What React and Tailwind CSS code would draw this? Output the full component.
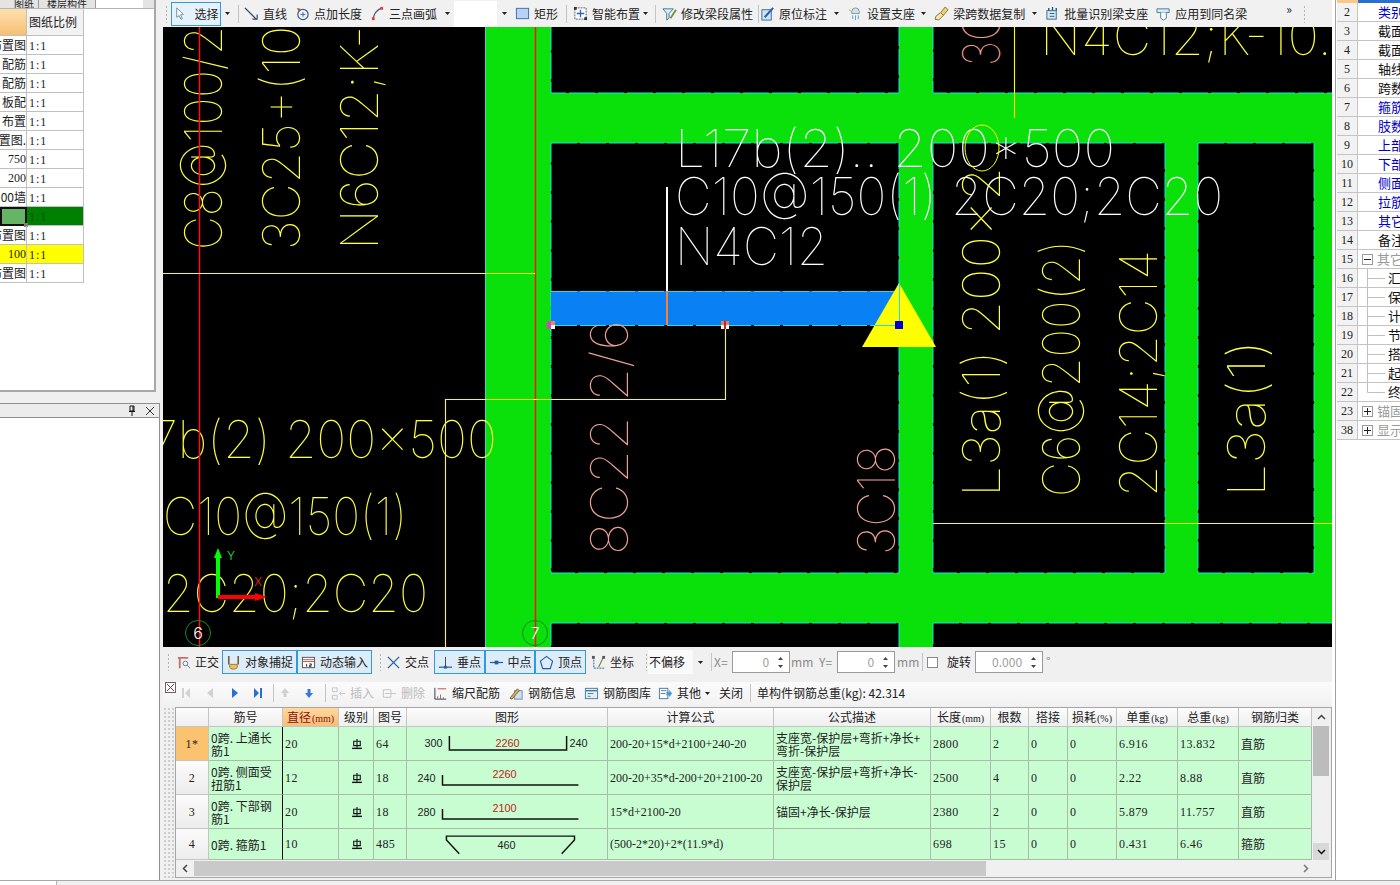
import React from 'react'

const CJK = "[font-family:'Noto_Sans_CJK_SC','Liberation_Sans',sans-serif]"
const NUM = "[font-family:'Liberation_Serif','Noto_Sans_CJK_SC',serif]"

// toolbar icons, all on a 16 grid
const Ic = ({ children, className = 'w-[15px] h-[15px]' }) => (
  <svg viewBox="0 0 16 16" className={`${className} flex-none`} fill="none">{children}</svg>
)
const icons = {
  cursor: <><path d="M4 2l7 7-3 .5 2 4-1.5.7-2-4L4 12z" fill="#fff" stroke="#6a8aa8" /></>,
  line: <><path d="M1 2l12 12" stroke="#35485c" strokeWidth="1.5" /><path d="M14 9v5H9" stroke="#35485c" strokeWidth="1.2" /></>,
  addLen: <><circle cx="8.5" cy="9" r="5.5" stroke="#345f9a" strokeWidth="1.3" /><path d="M8.5 6.5v5M6 9h5" stroke="#345f9a" /><path d="M2 2l4 1-2 3z" fill="#c05030" /></>,
  arc: <><path d="M3 15C4 8 7 4 13 2" stroke="#506070" strokeWidth="1.4" /><rect x="2" y="12" width="3" height="3" fill="#e04040" /><rect x="11" y="1" width="3" height="3" fill="#e04040" /></>,
  rect: <><rect x="1.5" y="2.5" width="13" height="11" fill="#b8d4f4" stroke="#3b6fb0" /></>,
  smart: <><rect x="2" y="2" width="12" height="12" fill="#fff" stroke="#555" strokeDasharray="2 1" /><path d="M8 4v8M4 8h8" stroke="#2a6ab0" strokeWidth="1.4" /><rect x="1" y="1" width="3" height="3" fill="#333" /><rect x="12" y="12" width="3" height="3" fill="#333" /></>,
  edit: <><path d="M1 3h11l-4.500 5v5L5 15V8z" fill="#d7ecf5" stroke="#42789a" /><path d="M9 13l6-9" stroke="#7a8f3a" strokeWidth="2" /></>,
  mark: <><rect x="2" y="4" width="10" height="11" fill="#cfe4f4" stroke="#3a6a9a" /><path d="M5 12l9-10" stroke="#2a5fa8" strokeWidth="2.2" /></>,
  support: <><path d="M8 2a4 4 0 014 4v2H4V6a4 4 0 014-4z" fill="#cfe0ea" stroke="#7a9aaa" /><path d="M5 10v4M8 10v5M11 10v4" stroke="#5aa0d0" /><path d="M1 4l3 2" stroke="#c8a040" /></>,
  copy: <><path d="M12 1l3 3-5 6-3-3z" fill="#e8d080" stroke="#8a7030" /><path d="M7 7l3 3-5 5-4-1 1-3z" fill="#f0e4b0" stroke="#8a7030" /></>,
  batch: <><rect x="2" y="5" width="10" height="9" fill="#d8e8f0" stroke="#3a6a8a" /><path d="M4 2v3M8 1v4M12 2v3" stroke="#1a5f8a" strokeWidth="1.5" /><path d="M5 8h5M5 11h5" stroke="#1a5f8a" /></>,
  apply: <><path d="M1 3h13v4H1z" fill="#d8e8f4" stroke="#4a7a9a" /><path d="M5 7v6l3 2 3-2V7" fill="#fff" stroke="#4a7a9a" /></>,
  ortho: <><path d="M2 3h11M4 3v11" stroke="#c87070" strokeWidth="2" /><circle cx="10" cy="9" r="2.5" stroke="#5a7a9a" /><path d="M12 11l3 3" stroke="#5a7a9a" /></>,
  snap: <><path d="M3 1v9M13 1v9" stroke="#6a4a2a" strokeWidth="1.5" /><path d="M4 10h8v3a3 3 0 01-3 2H7a3 3 0 01-3-2z" fill="#e8c060" stroke="#a07a20" /></>,
  dyn: <><rect x="1.5" y="2.5" width="13" height="11" fill="#fff" stroke="#555" /><path d="M2 5h12M2 7h12" stroke="#c05050" /><path d="M6 9.5v3M9 9.5h2v1.5H9v1.5h2" stroke="#222" /></>,
  cross: <><path d="M2 2l12 12M14 2L2 14" stroke="#1f5fa8" strokeWidth="1.4" /></>,
  perp: <><path d="M1 13h14" stroke="#1f5fa8" strokeWidth="1.3" /><path d="M8 2v11" stroke="#444" /><rect x="6.5" y="11.5" width="3" height="3" fill="#1f5fa8" /></>,
  mid: <><path d="M1 8h14" stroke="#1f5fa8" strokeWidth="1.3" /><rect x="6" y="6" width="4" height="4" fill="#1f5fa8" /></>,
  vertex: <><path d="M8 1.5l6.5 5-2.500 8H4l-2.500-8z" stroke="#1f5fa8" strokeWidth="1.2" /></>,
  coord: <><path d="M3 2v12h11" stroke="#1f5fa8" strokeDasharray="2 1" /><path d="M8 13L13 3" stroke="#6a8a30" strokeWidth="1.2" /><rect x="1" y="1" width="3" height="3" fill="#555" /><rect x="12" y="1" width="3" height="3" fill="#555" /></>,
  ins: <><path d="M1.5 2h5v4h-5zM1.5 10h5v4h-5z" stroke="#c4c4c4" /><path d="M9 8h6M9 8l2-2M9 8l2 2" stroke="#c4c4c4" /></>,
  del: <><path d="M1.5 4h8v8h-8z" stroke="#c4c4c4" /><path d="M3 8h12" stroke="#c4c4c4" /></>,
  scale: <><path d="M2 2v12M2 14h12" stroke="#333" /><path d="M5 11v3M8 9v5M11 12v2" stroke="#777" /><path d="M5 3h9" stroke="#c04040" /></>,
  info: <><rect x="6" y="5" width="8" height="9" fill="#cfe0f0" stroke="#6a8aaa" /><path d="M1 13l8-10 2 2-8 9z" fill="#d8b070" stroke="#806030" /></>,
  lib: <><rect x="1.5" y="2.5" width="13" height="11" fill="#e4f0f8" stroke="#4a7aa0" /><path d="M2 5h12" stroke="#4a7aa0" strokeWidth="1.5" /><path d="M4 8h6M4 11h3" stroke="#4a7aa0" /></>,
  other: <><rect x="1.5" y="2.5" width="9" height="11" fill="#fff" stroke="#4a7aa0" /><path d="M3 5h6M3 8h5" stroke="#4a7aa0" /><path d="M9 6h3V4l3 4-3 4v-2H9z" fill="#4a9ad8" /></>,
}

const Grip = ({ className = '' }) => (
  <span className={`w-[3px] h-[18px] flex-none bg-[radial-gradient(#b4b4b4_1px,transparent_1px)] bg-[length:3px_4px] ${className}`} />
)
const Sep = ({ className = '' }) => <span className={`w-px h-[18px] flex-none bg-[#c4c4c4] ${className}`} />
const Caret = ({ className = '' }) => (
  <svg viewBox="0 0 5 3" className={`w-[5px] h-[3px] flex-none ${className}`}><path d="M0 0h5L2.500 3z" fill="#222" /></svg>
)
const Tool = ({ icon, label, className = '', dim = false }) => (
  <span className={`flex items-center gap-[4px] flex-none whitespace-nowrap ${dim ? 'text-[#bcbcbc]' : ''} ${className}`}>
    <Ic>{icons[icon]}</Ic>
    {label}
  </span>
)
const Toggle = ({ icon, label, w }) => (
  <span className={`flex items-center justify-center gap-[4px] h-[24px] flex-none whitespace-nowrap border border-[#3399dd] bg-[#dcecf8] ${w}`}>
    <Ic>{icons[icon]}</Ic>
    {label}
  </span>
)
const Spin = ({ value, w, className = '' }) => (
  <span className={`flex items-center justify-end h-[22px] flex-none bg-white border border-[#9a9a9a] text-[#a0a0a0] ${w} ${className}`}>
    {value}
    <span className="flex flex-col items-center justify-center gap-[5px] w-[17px] ml-[3px]">
      <svg viewBox="0 0 5 3" className="w-[5px] h-[3px]"><path d="M0 3h5L2.500 0z" fill="#444" /></svg>
      <svg viewBox="0 0 5 3" className="w-[5px] h-[3px]"><path d="M0 0h5L2.500 3z" fill="#444" /></svg>
    </span>
  </span>
)

function TopToolbar() {
  return (
    <div className="h-[27px] flex items-center bg-[#f1f1f1] text-[12px] text-[#222]">
      <Grip className="ml-[2px]" />
      <span className="ml-[3px] w-[50px] h-[24px] flex items-center justify-center gap-[6px] border border-[#3399dd] bg-[#e6f2fb] flex-none">
        <Ic>{icons.cursor}</Ic>选择
      </span>
      <Caret className="ml-[4px]" />
      <Sep className="ml-[8px]" />
      <Tool icon="line" label="直线" className="ml-[5px]" />
      <Tool icon="addLen" label="点加长度" className="ml-[8px]" />
      <Tool icon="arc" label="三点画弧" className="ml-[8px]" />
      <Caret className="ml-[8px]" />
      <span className="ml-[4px] w-[43px] h-[26px] bg-white flex-none" />
      <Caret className="ml-[5px]" />
      <Tool icon="rect" label="矩形" className="ml-[8px]" />
      <Sep className="ml-[8px]" />
      <Tool icon="smart" label="智能布置" className="ml-[6px]" />
      <Caret className="ml-[3px]" />
      <Sep className="ml-[7px]" />
      <Tool icon="edit" label="修改梁段属性" className="ml-[6px]" />
      <Sep className="ml-[5px]" />
      <Tool icon="mark" label="原位标注" className="ml-px" />
      <Caret className="ml-[7px]" />
      <Tool icon="support" label="设置支座" className="ml-[9px]" />
      <Caret className="ml-[6px]" />
      <Tool icon="copy" label="梁跨数据复制" className="ml-[8px]" />
      <Caret className="ml-[7px]" />
      <Tool icon="batch" label="批量识别梁支座" className="ml-[8px]" />
      <Tool icon="apply" label="应用到同名梁" className="ml-[8px]" />
      <span className="ml-[39px] w-[10px] text-[12px] leading-none -mt-[10px] flex-none">»</span>
      <Grip className="ml-[7px]" />
    </div>
  )
}

function SnapToolbar() {
  return (
    <div className="h-[30px] flex items-center bg-[#f0f0f0] text-[12px] text-[#222]">
      <Grip className="ml-[4px]" />
      <Tool icon="ortho" label="正交" className="ml-[6px]" />
      <span className="ml-[3px] flex flex-none">
        <Toggle icon="snap" label="对象捕捉" w="w-[75px]" />
        <Toggle icon="dyn" label="动态输入" w="w-[75px]" />
      </span>
      <Grip className="ml-[7px]" />
      <Tool icon="cross" label="交点" className="ml-[4px]" />
      <span className="ml-[5px] flex flex-none">
        <Toggle icon="perp" label="垂点" w="w-[51px]" />
        <Toggle icon="mid" label="中点" w="w-[50px]" />
        <Toggle icon="vertex" label="顶点" w="w-[51px]" />
      </span>
      <Tool icon="coord" label="坐标" className="ml-[5px]" />
      <Grip className="ml-[11px]" />
      <span className="w-[45px] h-[24px] flex items-center bg-[#fafafa] flex-none pl-px">不偏移</span>
      <Caret className="ml-[5px]" />
      <Sep className="ml-[8px]" />
      <span className="ml-[2px] w-[17px] flex-none text-[#8a8a8a]">X=</span>
      <Spin value="0" w="w-[58px]" className="ml-px" />
      <span className="ml-px w-[22px] flex-none text-[#8a8a8a]">mm</span>
      <span className="ml-[6px] w-[17px] flex-none text-[#8a8a8a]">Y=</span>
      <Spin value="0" w="w-[58px]" className="ml-px" />
      <span className="ml-[2px] w-[22px] flex-none text-[#8a8a8a]">mm</span>
      <Sep className="ml-[3px]" />
      <span className="ml-[4px] w-[11px] h-[11px] flex-none bg-white border border-[#8a8a8a]" />
      <span className="ml-[9px] w-[24px] flex-none">旋转</span>
      <Spin value="0.000" w="w-[68px]" className="ml-[4px]" />
      <span className="ml-[3px] text-[#8a8a8a] -mt-[3px]">°</span>
    </div>
  )
}

const Nav = ({ d, color, className = '' }) => (
  <svg viewBox="0 0 14 14" className={`w-[14px] h-[14px] flex-none ${className}`}><path d={d} fill={color} /></svg>
)

function BarToolbar() {
  return (
    <div className="h-[23px] flex items-center bg-gradient-to-b from-[#fbfbfb] to-[#f2f2f2] text-[12px] text-[#222] pb-[1px]">
      <svg viewBox="0 0 11 11" className="ml-[2px] w-[11px] h-[11px] -mt-[12px] flex-none"><rect x=".5" y=".5" width="10" height="10" fill="#fff" stroke="#666" /><path d="M2 2l7 7M9 2L2 9" stroke="#a03030" /></svg>
      <Nav className="ml-[3px]" d="M3 2h2v10H3zM11 2v10L6 7z" color="#d2d2d2" />
      <Nav className="ml-[10px]" d="M10 2v10L4 7z" color="#d2d2d2" />
      <Nav className="ml-[11px]" d="M4 2v10l6-5z" color="#2a70d0" />
      <Nav className="ml-[9px]" d="M9 2h2v10H9zM3 2v10l5-5z" color="#2a70d0" />
      <Sep className="ml-[8px]" />
      <Nav className="ml-[4px]" d="M7 2l4 5H8.500v4h-3V7H3z" color="#d0d0d0" />
      <Nav className="ml-[10px]" d="M7 12L3 7h2.500V3h3v4H11z" color="#3a78d8" />
      <Sep className="ml-[9px]" />
      <Tool icon="ins" label="插入" dim className="ml-[5px]" />
      <Tool icon="del" label="删除" dim className="ml-[8px]" />
      <Tool icon="scale" label="缩尺配筋" className="ml-[8px]" />
      <Tool icon="info" label="钢筋信息" className="ml-[9px]" />
      <Tool icon="lib" label="钢筋图库" className="ml-[8px]" />
      <Tool icon="other" label="其他" className="ml-[7px]" />
      <Caret className="ml-[4px]" />
      <span className="ml-[9px] w-[24px] flex-none">关闭</span>
      <Sep className="ml-[7px]" />
      <span className="ml-[6px] whitespace-nowrap">单构件钢筋总重(kg): 42.314</span>
    </div>
  )
}

const CadText = ({ x, y, len, rot, color = '#ffff40', children }) => (
  <text
    x={x}
    y={y}
    textLength={len}
    lengthAdjust="spacingAndGlyphs"
    fontSize="52"
    fontWeight="100"
    fontFamily="Inter, 'DejaVu Sans', sans-serif"
    fill={color}
    transform={rot ? `rotate(-90 ${x} ${y})` : undefined}
  >
    {children}
  </text>
)

const GREEN = '#0ae00a'
const CELLS = [
  [551, 143, 348, 430],
  [933, 143, 232, 430],
  [1198, 143, 116, 430],
  [551, 20, 348, 73],
  [933, 20, 420, 73],
  [551, 623, 348, 40],
  [933, 623, 420, 40],
]

function Canvas() {
  return (
    <svg viewBox="163 27 1169 620" className="block w-[1169px] h-[620px] flex-none">
      <rect x="163" y="27" width="1169" height="620" fill="#000" />
      <rect x="485" y="27" width="847" height="620" fill={GREEN} />
      {CELLS.map(([x, y, w, h]) => (
        <rect key={`${x}-${y}`} x={x} y={y} width={w} height={h} fill="#000" stroke="#20e0e0" strokeDasharray="26 3" />
      ))}
      <path d="M485.500 27v620" stroke="#20e0e0" />
      <rect x="551" y="291" width="348" height="34" fill="#0a80f5" />
      <path d="M551 291.500h348M551 325.500h348" stroke="#20e0e0" strokeDasharray="26 3" />

      <CadText x={222} y={250} len={224} rot>C8@100/2</CadText>
      <CadText x={300} y={250} len={224} rot>3C25+(10</CadText>
      <CadText x={378} y={250} len={224} rot>N6C12;K-</CadText>
      <CadText x={1000} y={66} len={56} rot color="#f0a090">3C</CadText>
      <CadText x={1000} y={497} len={330} rot>L3a(1) 200×2</CadText>
      <CadText x={1080} y={497} len={257} rot>C6@200(2)</CadText>
      <CadText x={1157} y={497} len={247} rot>2C14;2C14</CadText>
      <CadText x={1265} y={497} len={157} rot>L3a(1)</CadText>
      <CadText x={628} y={555} len={235} rot color="#f0a090">8C22 2/6</CadText>
      <CadText x={895} y={555} len={110} rot color="#f0a090">3C18</CadText>
      <CadText x={150} y={458} len={347}>7b(2) 200×500</CadText>
      <CadText x={163} y={535} len={244}>C10@150(1)</CadText>
      <CadText x={163} y={612} len={265}>2C20;2C20</CadText>
      <CadText x={1040} y={55} len={292}>N4C12;K-10.</CadText>
      <CadText x={675} y={167} len={440} color="#fff">L17b(2).. 200*500</CadText>
      <CadText x={675} y={215} len={548} color="#fff">C10@150(1) 2C20;2C20</CadText>
      <CadText x={675} y={265} len={153} color="#fff">N4C12</CadText>

      <path d="M199.500 27v620M535.500 27v620" stroke="#ff1010" strokeWidth="1.500" />
      <path d="M163 273.500h372M1014.500 27v91M933 523.500h399M725.500 325v74.500H445.500V647" stroke="#ffff00" strokeWidth="1.100" fill="none" />
      <ellipse cx="982" cy="148" rx="17" ry="23" fill="none" stroke="#ffff00" />
      <path d="M667 187v104" stroke="#fff" strokeWidth="2" />
      <path d="M667 291v34" stroke="#ff8030" strokeWidth="2" />

      <path d="M899 283l37 64h-74z" fill="#ffff00" />
      <path d="M899.500 283v42M875 325.500h24" stroke="#20e0e0" />
      <rect x="895" y="321" width="8" height="8" fill="#0000c8" />

      <rect x="547" y="321" width="4" height="8" fill="#e040c0" />
      <rect x="551" y="321" width="4" height="4" fill="#e09050" />
      <rect x="551" y="325" width="4" height="4" fill="#fff" />
      <rect x="721" y="321" width="8" height="4" fill="#e88050" />
      <rect x="721" y="325" width="8" height="4" fill="#fff" />
      <rect x="724" y="321" width="2" height="8" fill="#d02020" />

      <path d="M218 598v-44" stroke="#00ff00" strokeWidth="4" />
      <path d="M218 548l-4 10h8z" fill="#00ff00" />
      <path d="M218 597h40" stroke="#ff0000" strokeWidth="4" />
      <path d="M267 597l-12-4v8z" fill="#ff0000" />
      <text x="227" y="560" fontSize="12" fill="#20c040" fontFamily="Liberation Sans">Y</text>
      <text x="254" y="586" fontSize="12" fill="#d02020" fontFamily="Liberation Sans">X</text>

      <circle cx="198" cy="633" r="12.500" fill="none" stroke="#1a8a2a" />
      <text x="198" y="639" fontSize="16" fill="#fff" textAnchor="middle" fontWeight="300" fontFamily="Inter">6</text>
      <circle cx="535" cy="633" r="12.500" fill="none" stroke="#108a20" />
      <text x="535" y="639" fontSize="16" fill="#fff" textAnchor="middle" fontWeight="300" fontFamily="Inter">7</text>
    </svg>
  )
}

const Grade = () => (
  <svg viewBox="0 0 11 11" className="w-[12px] h-[12px]" fill="none" stroke="#111">
    <path d="M2.500 3h6v4h-6zM5.500 1v8" />
    <path d="M1 9.500h9" strokeWidth="1.300" />
  </svg>
)

const RED = '#c02020'
const Bent = ({ left, mid, right, x0, x1, y, tick, midX, midY, rightTick }) => (
  <svg viewBox="0 0 201 34" className="w-[201px] h-[34px]">
    <text x={x0 - 7} y={y - 3} textAnchor="end" fontSize="11" fontFamily="Liberation Sans" fill="#222">{left}</text>
    <path d={`M${x0} ${y - tick}V${y}H${x1}${rightTick ? `V${y - rightTick}` : ''}`} fill="none" stroke="#111" strokeWidth="1.500" />
    <text x={midX} y={midY} textAnchor="middle" fontSize="11" fontFamily="Liberation Sans" fill={RED}>{mid}</text>
    {right && <text x={x1 + 3} y={y - 3} fontSize="11" fontFamily="Liberation Sans" fill="#222">{right}</text>}
  </svg>
)
const Stirrup = () => (
  <svg viewBox="0 0 201 30" className="w-[201px] h-[30px]">
    <path d="M51 25L38 11V7h130v4l-13 14" fill="none" stroke="#111" strokeWidth="1.500" />
    <text x="99" y="20" textAnchor="middle" fontSize="11" fontFamily="Liberation Sans" fill="#222">460</text>
  </svg>
)

const HEAD = [['', ''], ['筋号', ''], ['直径', '(mm)'], ['级别', ''], ['图号', ''], ['图形', ''], ['计算公式', ''], ['公式描述', ''], ['长度', '(mm)'], ['根数', ''], ['搭接', ''], ['损耗', '(%)'], ['单重', '(kg)'], ['总重', '(kg)'], ['钢筋归类', '']]
const ROWS = [
  { n: '1*', name: '0跨. 上通长\n筋1', d: '20', fig: '64', shape: <Bent left="300" mid="2260" right="240" x0={41} x1={160} y={23} tick={14} rightTick={14} midX={100} midY={20} />, f: '200-20+15*d+2100+240-20', desc: '支座宽-保护层+弯折+净长+\n弯折-保护层', len: '2800', c: '2', w: '6.916', t: '13.832', k: '直筋' },
  { n: '2', name: '0跨. 侧面受\n扭筋1', d: '12', fig: '18', shape: <Bent left="240" mid="2260" x0={34} x1={172} y={24} tick={10} midX={97} midY={17} />, f: '200-20+35*d-200+20+2100-20', desc: '支座宽-保护层+弯折+净长-\n保护层', len: '2500', c: '4', w: '2.22', t: '8.88', k: '直筋' },
  { n: '3', name: '0跨. 下部钢\n筋1', d: '20', fig: '18', shape: <Bent left="280" mid="2100" x0={34} x1={172} y={24} tick={10} midX={97} midY={17} />, f: '15*d+2100-20', desc: '锚固+净长-保护层', len: '2380', c: '2', w: '5.879', t: '11.757', k: '直筋' },
  { n: '4', name: '0跨. 箍筋1', d: '10', fig: '485', shape: <Stirrup />, f: '(500-2*20)+2*(11.9*d)', desc: '', len: '698', c: '15', w: '0.431', t: '6.46', k: '箍筋' },
]
const cell = 'border-r border-b border-[#a8bca8] flex items-center pl-[2px] overflow-hidden bg-[#c8fdd2]'
const num = `${NUM} text-[12px] tracking-[0.4px] text-[#222]`

function RebarGrid() {
  return (
    <div className={`grid grid-cols-[33px_74px_56px_35px_33px_201px_166px_157px_60px_38px_39px_49px_61px_61px_73px] grid-rows-[19px_34px_34px_34px_31px] w-[1136px] flex-none overflow-hidden text-[12px] text-[#222] ${CJK}`}>
      {HEAD.map(([h, unit], i) => (
        <div
          key={h + i}
          className={`flex items-center justify-center whitespace-nowrap border-r border-b border-[#c4c4c4] bg-gradient-to-b ${i === 2 ? 'from-[#ffd89c] to-[#f6bf74] text-[#8a1020]' : 'from-[#fcfcfc] to-[#efefef]'}`}
        >
          <span>
            {h}
            {unit && <span className={`${NUM} text-[10px] ml-px`}>{unit}</span>}
          </span>
        </div>
      ))}
      {ROWS.map((r, ri) => (
        <React.Fragment key={r.n}>
          <div className={`flex items-center justify-center border-r border-b border-[#c4c4c4] ${num} ${ri === 0 ? 'bg-[#fbc270] text-[#8a3010]' : 'bg-gradient-to-b from-[#fbfbfb] to-[#ececec]'}`}>{r.n}</div>
          <div className={`${cell} leading-[13px] whitespace-pre-line border-r-[#111]`}><span className="w-full">{r.name}</span></div>
          <div className={`${cell} ${num} ${ri === 0 ? 'bg-[#aee8d8]' : ''}`}>{r.d}</div>
          <div className={`${cell} justify-center`}><Grade /></div>
          <div className={`${cell} ${num}`}>{r.fig}</div>
          <div className={`${cell} pl-0`}>{r.shape}</div>
          <div className={`${cell} ${NUM} text-[12px] text-[#222] whitespace-nowrap`}>{r.f}</div>
          <div className={`${cell} leading-[13px] whitespace-pre-line`}><span className="w-full">{r.desc}</span></div>
          <div className={`${cell} ${num}`}>{r.len}</div>
          <div className={`${cell} ${num}`}>{r.c}</div>
          <div className={`${cell} ${num}`}>0</div>
          <div className={`${cell} ${num}`}>0</div>
          <div className={`${cell} ${num}`}>{r.w}</div>
          <div className={`${cell} ${num}`}>{r.t}</div>
          <div className={cell}>{r.k}</div>
        </React.Fragment>
      ))}
    </div>
  )
}

function RebarTable() {
  return (
    <div className="h-[171px] flex bg-[#f0f0f0]">
      <div className="w-[12px] flex-none bg-[radial-gradient(#cfcfcf_1px,transparent_1px)] bg-[length:4px_4px]" />
      <div className="w-[1157px] flex-none border border-[#a6a6a6] bg-[#f0f0f0] flex flex-col">
        <div className="h-[152px] flex flex-none">
          <RebarGrid />
          <div className="ml-px w-[16px] flex flex-col flex-none">
            <div className="h-[18px] flex items-center justify-center">
              <svg viewBox="0 0 9 6" className="w-[9px] h-[6px]"><path d="M1 5l3.500-3.500L8 5" fill="none" stroke="#444" strokeWidth="1.500" /></svg>
            </div>
            <div className="h-[50px] bg-[#bcbcbc]" />
            <div className="flex-1" />
            <div className="h-[17px] flex items-center justify-center bg-[#d8d8d8]">
              <svg viewBox="0 0 9 6" className="w-[9px] h-[6px]"><path d="M1 1l3.500 3.500L8 1" fill="none" stroke="#111" strokeWidth="1.500" /></svg>
            </div>
          </div>
        </div>
        <div className="flex-1 flex items-center min-h-0">
          <div className="w-[18px] flex justify-center flex-none">
            <svg viewBox="0 0 6 9" className="w-[6px] h-[9px]"><path d="M5 1L1.500 4.500 5 8" fill="none" stroke="#444" strokeWidth="1.500" /></svg>
          </div>
          <div className="w-[792px] h-[15px] bg-[#c9c9c9] flex-none" />
          <div className="flex-1" />
          <div className="w-[28px] flex-none">
            <svg viewBox="0 0 6 9" className="w-[6px] h-[9px]"><path d="M1 1l3.500 3.500L1 8" fill="none" stroke="#777" strokeWidth="1.500" /></svg>
          </div>
        </div>
      </div>
    </div>
  )
}

const DRAWINGS = ['布置图', '配筋', '配筋', '板配', '布置', '置图.', '750', '200', '00墙', '', '布置图', '100', '布置图']

function LeftPanel() {
  return (
    <div className={`w-[160px] flex flex-col flex-none text-[12px] text-[#222] ${CJK}`}>
      <div className="w-[156px] h-[392px] flex-none flex flex-col border-r-2 border-b-2 border-[#a8a8a8] bg-white">
        <div className="h-[9px] flex flex-none bg-[#e4e4e4] overflow-hidden border-b border-[#b4b4b4]">
          <span className="w-[39px] flex items-end justify-end pr-[4px] leading-[8px] overflow-hidden text-[10px] border-r border-[#9a9a9a]">图纸</span>
          <span className="w-[57px] flex items-end justify-center leading-[8px] overflow-hidden text-[10px] border-r border-[#9a9a9a]">楼层构件</span>
          <span className="w-[47px] bg-white" />
        </div>
        <div className="grid grid-cols-[27px_57px] grid-rows-[27px] auto-rows-[19px] w-[84px]">
          <div className="bg-gradient-to-b from-[#fde0ad] to-[#f6bf74] border-r border-b border-[#c0c0c0]" />
          <div className="flex items-center pl-[2px] bg-[#f2f2f2] border-r border-b border-[#c0c0c0] whitespace-nowrap">图纸比例</div>
          {DRAWINGS.map((d, i) => {
            const green = i === 9
            const yellow = i === 11
            return (
              <React.Fragment key={i}>
                <div className={`relative flex items-center justify-end whitespace-nowrap ${green ? 'bg-[#66b566] border-2 border-[#111]' : 'border-r border-b border-[#c0c0c0]'} ${yellow ? 'bg-[#ffff00]' : ''} ${i === 6 || i === 7 || i === 11 ? NUM : ''}`}>
                  <span className="overflow-hidden flex justify-end w-full">{d}</span>
                  {green && <span className="absolute -right-[3px] -bottom-[3px] w-[4px] h-[4px] bg-[#808080]" />}
                </div>
                <div className={`flex items-center pl-[2px] pt-[1px] border-r border-b border-[#c0c0c0] ${NUM} tracking-[1px] ${green ? 'bg-[#008000] text-[#0a4a0a]' : ''} ${yellow ? 'bg-[#ffff00]' : ''}`}>1:1</div>
              </React.Fragment>
            )
          })}
        </div>
      </div>
      <div className="h-[11px] flex-none" />
      <div className="h-[15px] flex-none flex items-center justify-end bg-[#ececec] border-y border-r border-[#8e8e8e]">
        <svg viewBox="0 0 10 11" className="w-[10px] h-[11px]"><path d="M3 1h4v5H3zM2 6.500h6M5 7v4" fill="none" stroke="#111" /><path d="M6 1v5" stroke="#111" /></svg>
        <svg viewBox="0 0 10 10" className="w-[10px] h-[10px] ml-[8px] mr-[4px]"><path d="M1 1l8 8M9 1L1 9" stroke="#333" /></svg>
      </div>
      <div className="flex-1 bg-white border-r border-[#8e8e8e]" />
    </div>
  )
}

const PROPS = [
  ['2', '类别名称', 'blue'], ['3', '截面宽度'], ['4', '截面高度'], ['5', '轴线距离'], ['6', '跨数量'],
  ['7', '箍筋', 'blue'], ['8', '肢数', 'blue'], ['9', '上部通长筋', 'blue'], ['10', '下部通长筋', 'blue'],
  ['11', '侧面构造', 'blue'], ['12', '拉筋', 'blue'], ['13', '其它箍筋', 'blue'], ['14', '备注'],
  ['15', '其它属性', 'minus'], ['16', '汇总信息', 'leaf'], ['17', '保护层', 'leaf'], ['18', '计算设置', 'leaf'],
  ['19', '节点设置', 'leaf'], ['20', '搭接设置', 'leaf'], ['21', '起点标高', 'leaf'], ['22', '终点标高', 'last'],
  ['23', '锚固搭接', 'plus'], ['38', '显示样式', 'plus'],
]

const TreeBox = ({ plus }) => (
  <svg viewBox="0 0 11 11" className="w-[11px] h-[11px] flex-none ml-[3px] mr-[4px]">
    <rect x=".5" y=".5" width="10" height="10" fill="#fff" stroke="#9a9a9a" />
    <path d={plus ? 'M2 5.500h7M5.500 2v7' : 'M2 5.500h7'} stroke="#222" />
  </svg>
)
const TreeLine = ({ last }) => (
  <svg viewBox="0 0 29 19" className="w-[29px] h-[19px] flex-none">
    <path d={last ? 'M8.500 0v9.500H26' : 'M8.500 0v19M8.500 9.500H26'} fill="none" stroke="#c0c0c0" />
  </svg>
)

function RightPanel() {
  return (
    <div className={`w-[65px] flex-none flex flex-col bg-white border-l border-[#a0a0a0] text-[13px] overflow-hidden ${CJK}`}>
      <div className="h-[3px] flex flex-none ml-px">
        <span className="w-[21px] bg-[#f6c988]" />
        <span className="flex-1 bg-[#2a6fd0]" />
      </div>
      {PROPS.map(([n, t, kind]) => (
        <div key={n} className="h-[19px] flex flex-none ml-px border-b border-[#c4c4c4]">
          <span className={`w-[21px] flex-none flex items-center justify-center border-r border-[#c4c4c4] bg-[#f2f2f2] text-[#222] ${NUM} text-[12px]`}>{n}</span>
          <span className={`flex items-center whitespace-nowrap overflow-hidden ${kind === 'blue' ? 'text-[#0000c8] pl-[20px]' : kind === 'minus' || kind === 'plus' ? 'text-[#9a9a9a] pl-[1px]' : kind ? 'text-[#111] pl-[1px]' : 'text-[#111] pl-[20px]'}`}>
            {kind === 'minus' && <TreeBox />}
            {kind === 'plus' && <TreeBox plus />}
            {(kind === 'leaf' || kind === 'last') && <TreeLine last={kind === 'last'} />}
            {t}
          </span>
        </div>
      ))}
    </div>
  )
}

export default function App() {
  return (
    <div className={`w-[1400px] h-[885px] overflow-hidden flex flex-col bg-[#f0f0f0] ${CJK}`}>
      <div className="h-[880px] flex flex-none">
        <LeftPanel />
        <div className="w-[3px] flex-none" />
        <div className="w-[1169px] flex flex-col flex-none">
          <TopToolbar />
          <Canvas />
          <SnapToolbar />
          <div className="h-[5px] flex-none" />
          <BarToolbar />
          <div className="h-[2px] flex-none" />
          <RebarTable />
        </div>
        <div className="w-[3px] flex-none bg-white" />
        <RightPanel />
      </div>
      <div className="h-[5px] flex flex-none border-t border-[#a8a8a8]">
        <span className="w-[57px] bg-white border-r border-[#b0b0b0]" />
      </div>
    </div>
  )
}
